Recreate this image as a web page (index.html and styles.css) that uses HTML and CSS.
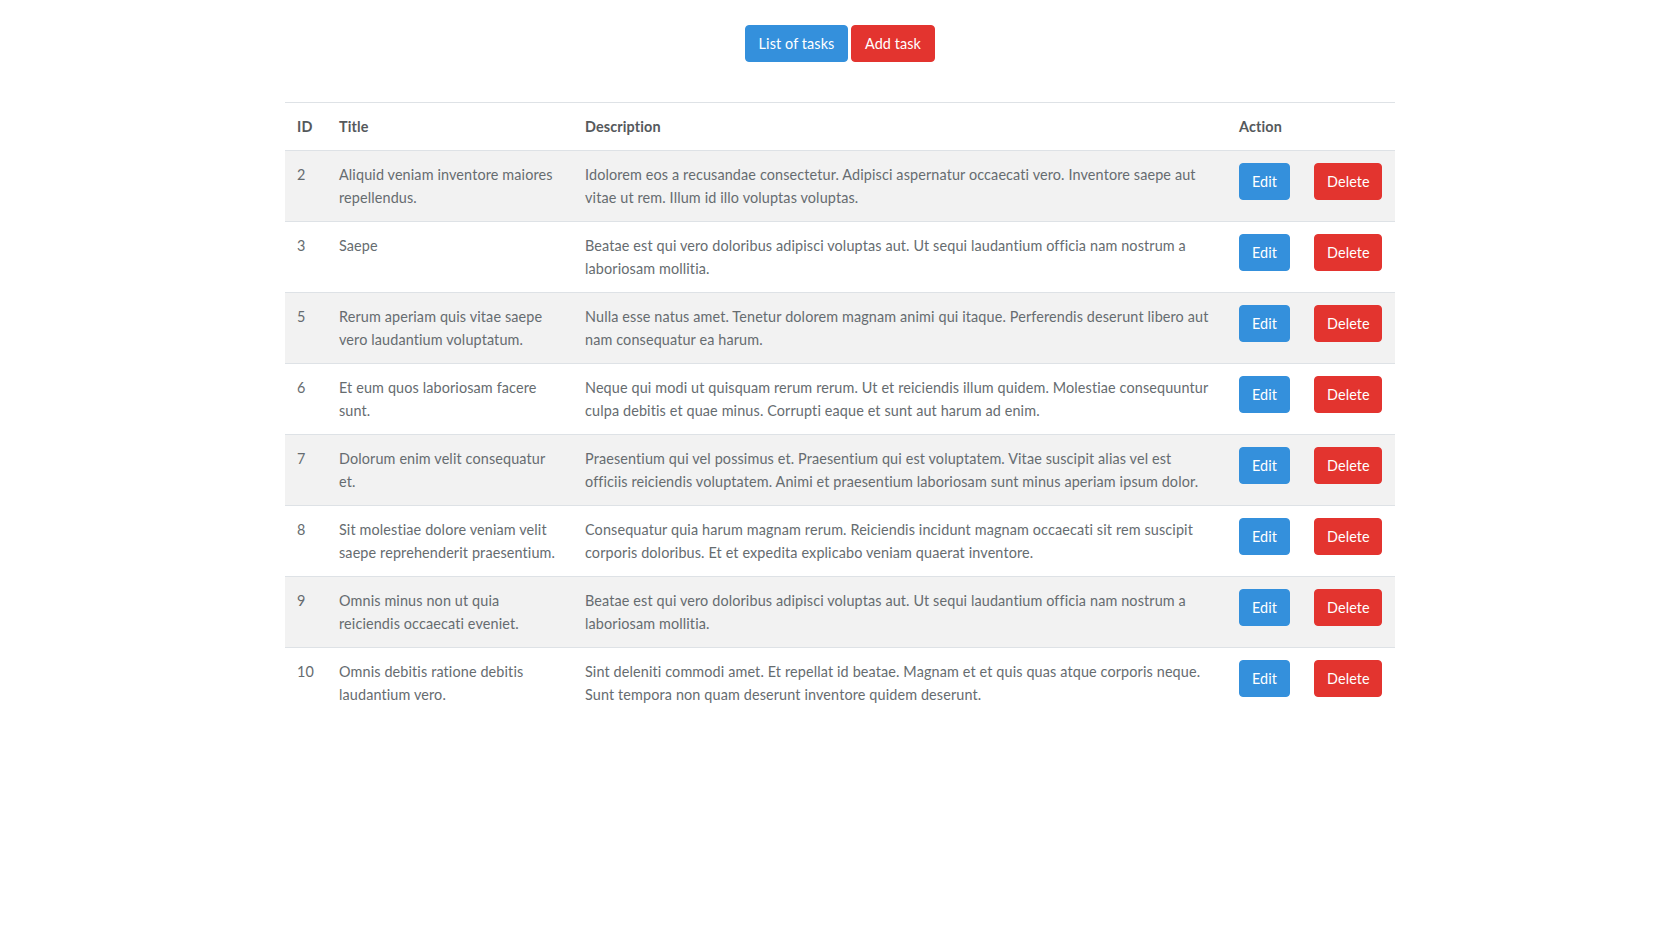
FILE: index.html
```html
<!DOCTYPE html>
<html lang="en">
<head>
<meta charset="utf-8">
<title>Tasks</title>
<link rel="stylesheet" href="styles.css">
</head>
<body>
<div class="page">
  <nav class="nav">
    <a class="btn btn-blue" href="#">List of tasks</a>
    <a class="btn btn-red" href="#">Add task</a>
  </nav>
  <div class="container">
    <table class="table">
      <colgroup>
        <col class="c-id"><col class="c-title"><col class="c-desc"><col class="c-edit"><col class="c-del">
      </colgroup>
      <thead>
        <tr><th>ID</th><th>Title</th><th>Description</th><th>Action</th><th></th></tr>
      </thead>
      <tbody>
        <tr><td>2</td><td>Aliquid veniam inventore maiores repellendus.</td><td>Idolorem eos a recusandae consectetur. Adipisci aspernatur occaecati vero. Inventore saepe aut vitae ut rem. Illum id illo voluptas voluptas.</td><td><a class="btn btn-blue" href="#">Edit</a></td><td><a class="btn btn-red" href="#">Delete</a></td></tr>
        <tr><td>3</td><td>Saepe</td><td>Beatae est qui vero doloribus adipisci voluptas aut. Ut sequi laudantium officia nam nostrum a laboriosam mollitia.</td><td><a class="btn btn-blue" href="#">Edit</a></td><td><a class="btn btn-red" href="#">Delete</a></td></tr>
        <tr><td>5</td><td>Rerum aperiam quis vitae saepe vero laudantium voluptatum.</td><td>Nulla esse natus amet. Tenetur dolorem magnam animi qui itaque. Perferendis deserunt libero aut nam consequatur ea harum.</td><td><a class="btn btn-blue" href="#">Edit</a></td><td><a class="btn btn-red" href="#">Delete</a></td></tr>
        <tr><td>6</td><td>Et eum quos laboriosam facere sunt.</td><td>Neque qui modi ut quisquam rerum rerum. Ut et reiciendis illum quidem. Molestiae consequuntur culpa debitis et quae minus. Corrupti eaque et sunt aut harum ad enim.</td><td><a class="btn btn-blue" href="#">Edit</a></td><td><a class="btn btn-red" href="#">Delete</a></td></tr>
        <tr><td>7</td><td>Dolorum enim velit consequatur et.</td><td>Praesentium qui vel possimus et. Praesentium qui est voluptatem. Vitae suscipit alias vel est officiis reiciendis voluptatem. Animi et praesentium laboriosam sunt minus aperiam ipsum dolor.</td><td><a class="btn btn-blue" href="#">Edit</a></td><td><a class="btn btn-red" href="#">Delete</a></td></tr>
        <tr><td>8</td><td>Sit molestiae dolore veniam velit saepe reprehenderit praesentium.</td><td>Consequatur quia harum magnam rerum. Reiciendis incidunt magnam occaecati sit rem suscipit corporis doloribus. Et et expedita explicabo veniam quaerat inventore.</td><td><a class="btn btn-blue" href="#">Edit</a></td><td><a class="btn btn-red" href="#">Delete</a></td></tr>
        <tr><td>9</td><td>Omnis minus non ut quia reiciendis occaecati eveniet.</td><td>Beatae est qui vero doloribus adipisci voluptas aut. Ut sequi laudantium officia nam nostrum a laboriosam mollitia.</td><td><a class="btn btn-blue" href="#">Edit</a></td><td><a class="btn btn-red" href="#">Delete</a></td></tr>
        <tr><td>10</td><td>Omnis debitis ratione debitis laudantium vero.</td><td>Sint deleniti commodi amet. Et repellat id beatae. Magnam et et quis quas atque corporis neque. Sunt tempora non quam deserunt inventore quidem deserunt.</td><td><a class="btn btn-blue" href="#">Edit</a></td><td><a class="btn btn-red" href="#">Delete</a></td></tr>
      </tbody>
    </table>
  </div>
</div>
</body>
</html>
```
FILE: styles.css
```css
html, body {
  margin: 0;
  padding: 0;
  background: #fff;
}
body {
  font-family: Lato, "Noto Sans", "Liberation Sans", sans-serif;
  font-size: 14.4px;
  line-height: 23px;
  letter-spacing: 0.13px;
  color: #666c70;
}
.page {
  padding-top: 25px;
}
.nav {
  display: flex;
  justify-content: center;
  gap: 3px;
  margin-bottom: 40px;
}
.btn {
  display: inline-block;
  box-sizing: border-box;
  padding: 6px 12px;
  border: 1px solid transparent;
  border-radius: 4px;
  color: #fff;
  text-decoration: none;
  font-size: 14.4px;
  line-height: 23px;
  letter-spacing: 0.1px;
  text-align: center;
}
.btn-blue {
  background: #3490dc;
  border-color: #3490dc;
}
.btn-red {
  background: #e3342f;
  border-color: #e3342f;
}
.nav .btn-blue { width: 103px; }
.nav .btn-red { width: 84px; }
.container {
  width: 1110px;
  margin: 0 auto;
}
.table {
  width: 100%;
  border-collapse: collapse;
  table-layout: fixed;
}
.c-id { width: 42px; }
.c-title { width: 246px; }
.c-desc { width: 654px; }
.c-edit { width: 75px; }
.c-del { width: 93px; }
.table th, .table td {
  padding: 12px;
  text-align: left;
  vertical-align: top;
  border-top: 1px solid #dee2e6;
}
.table th {
  font-weight: 700;
  color: #55595c;
}
.table tbody tr:nth-child(odd) {
  background: #f2f2f2;
}
.table td .btn-blue { width: 51px; }
.table td .btn-red { width: 68px; }
```
